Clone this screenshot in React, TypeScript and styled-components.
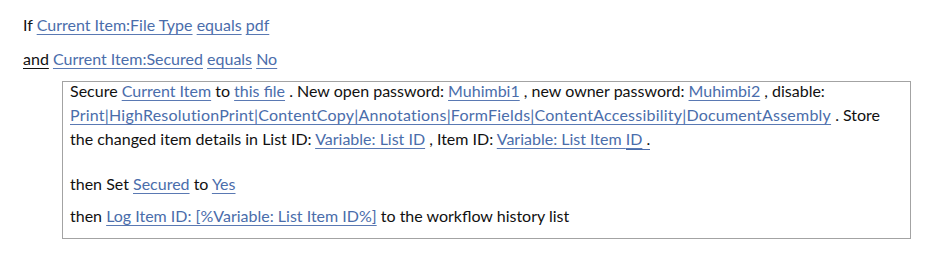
import React from 'react';
import styled, { createGlobalStyle } from 'styled-components';

const GlobalStyle = createGlobalStyle`
  body {
    margin: 0;
    background: #ffffff;
  }
`;

const Page = styled.div`
  width: 930px;
  height: 269px;
  box-sizing: border-box;
  padding: 13px 0 0 23px;
  font-family: Lato, 'Open Sans', sans-serif;
  font-size: 16px;
  color: #111111;
  background: #ffffff;
`;

const Condition = styled.div`
  line-height: 24px;
  margin-bottom: 10px;
  white-space: nowrap;
`;

const Keyword = styled.span`
  text-decoration: underline;
  text-underline-offset: 3px;
`;

const Link = styled.span<{ $spread?: boolean }>`
  color: #4a6dab;
  text-decoration: underline;
  text-decoration-color: #5a79b3;
  text-underline-offset: 3px;
  letter-spacing: ${p => (p.$spread ? '0.22px' : 'normal')};
`;

const DoubleUnder = styled.span`
  border-bottom: 1px solid #4a6dab;
  padding-bottom: 1px;
`;

const ActionBox = styled.div`
  margin: 0 0 0 39px;
  width: 849px;
  box-sizing: border-box;
  border: 1px solid #a3a3a3;
  padding: 0 8px 10px 7px;
`;

const Step = styled.div<{ $gap?: number }>`
  line-height: 24px;
  margin-top: ${p => p.$gap ?? 0}px;
  white-space: nowrap;
`;

const disabled = [
  'Print',
  'HighResolutionPrint',
  'ContentCopy',
  'Annotations',
  'FormFields',
  'ContentAccessibility',
  'DocumentAssembly',
];

export default function App() {
  return (
    <>
      <GlobalStyle />
      <Page>
        <Condition>
          If <Link>Current Item:File Type</Link> <Link>equals</Link> <Link>pdf</Link>
        </Condition>
        <Condition>
          <Keyword>and</Keyword> <Link>Current Item:Secured</Link> <Link>equals</Link> <Link>No</Link>
        </Condition>
        <ActionBox>
          <Step $gap={-3}>
            Secure <Link>Current Item</Link> to <Link>this file</Link> . New open password:{' '}
            <Link>Muhimbi1</Link> , new owner password: <Link>Muhimbi2</Link> , disable:
          </Step>
          <Step>
            <Link $spread>{disabled.join('|')}</Link> . Store
          </Step>
          <Step>
            the changed item details in List ID: <Link>Variable: List ID</Link> , Item ID:{' '}
            <Link>Variable: List Item </Link>
            <DoubleUnder>
              <Link>ID</Link> .
            </DoubleUnder>
          </Step>
          <Step $gap={21}>
            then Set <Link>Secured</Link> to <Link>Yes</Link>
          </Step>
          <Step $gap={8}>
            then <Link>Log Item ID: [%Variable: List Item ID%]</Link> to the workflow history list
          </Step>
        </ActionBox>
      </Page>
    </>
  );
}
